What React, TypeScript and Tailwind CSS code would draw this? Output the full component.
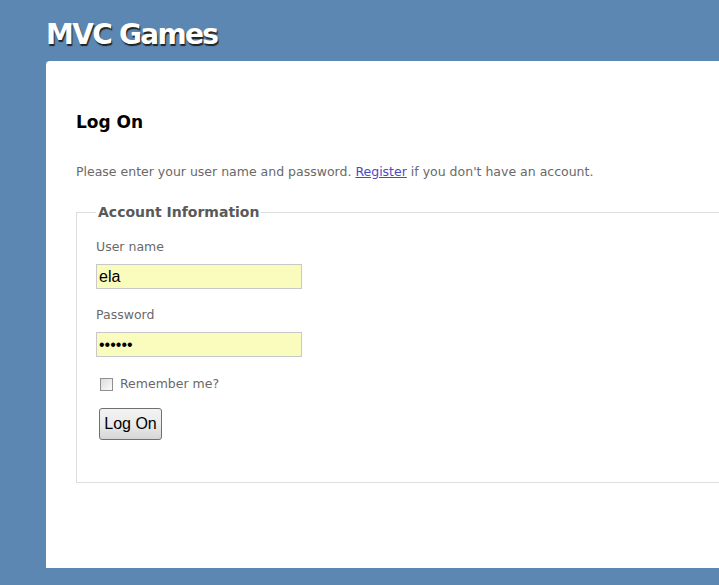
import React from "react";

export default function App() {
  const trebuchet = { fontFamily: '"DejaVu Sans", "Noto Sans", sans-serif' };
  return (
    <div className="w-[719px] h-[585px] overflow-hidden bg-[#5c87b2]" style={trebuchet}>
      <div className="h-[61px] pl-[46px] pt-[17px]">
        <h1
          className="text-[28px] font-bold text-white leading-[36px] tracking-[-1.7px] [text-shadow:1px_2px_1px_#222]"
        >
          MVC Games
        </h1>
      </div>
      <div className="ml-[46px] w-[960px] h-[507px] bg-white rounded-tl-[4px] pl-[30px] pr-[30px] pt-[50px]">
        <h2 className="text-[17px] font-bold text-black leading-[22px]">Log On</h2>
        <p className="mt-[31px] text-[12.5px] text-[#696969] leading-[16px]">
          Please enter your user name and password.{" "}
          <a className="text-[#4b4bc6] underline" href="#">Register</a> if you don't have an account.
        </p>
        <fieldset className="mt-[23px] border border-[#dddddd] h-[280px] pl-[19px] pt-0">
          <legend className="px-[2px] text-[14px] font-bold text-[#595959] leading-[18px]">
            Account Information
          </legend>
          <div className="mt-[18px] text-[12.5px] text-[#696969] leading-[16px]">User name</div>
          <input
            readOnly
            value="ela"
            className="mt-[9px] block w-[206px] h-[25px] bg-[#fafcbd] border border-[#c8c8c8] px-[2px] text-[16px] text-black outline-none"
            style={{ fontFamily: '"Liberation Sans", Arial, sans-serif' }}
          />
          <div className="mt-[18px] text-[12.5px] text-[#696969] leading-[16px]">Password</div>
          <input
            readOnly
            type="password"
            value="secret"
            className="mt-[9px] block w-[206px] h-[25px] bg-[#fafcbd] border border-[#c8c8c8] px-[2px] text-[16px] text-black outline-none"
            style={{ fontFamily: '"Liberation Sans", Arial, sans-serif' }}
          />
          <div className="mt-[19px] flex items-center">
            <span className="ml-[4px] w-[13px] h-[13px] border border-[#8f8f8f] bg-gradient-to-br from-[#dcdcdc] to-[#fbfbfb]" />
            <span className="ml-[7px] text-[12.5px] text-[#696969] leading-[16px]">Remember me?</span>
          </div>
          <button
            className="mt-[16px] ml-[3px] w-[63px] h-[32px] rounded-[3px] border border-[#707070] bg-gradient-to-b from-[#f2f2f2] via-[#ebebeb] to-[#d6d6d6] text-[16px] text-black leading-none"
            style={{ fontFamily: '"Liberation Sans", Arial, sans-serif' }}
          >
            Log On
          </button>
        </fieldset>
      </div>
    </div>
  );
}
